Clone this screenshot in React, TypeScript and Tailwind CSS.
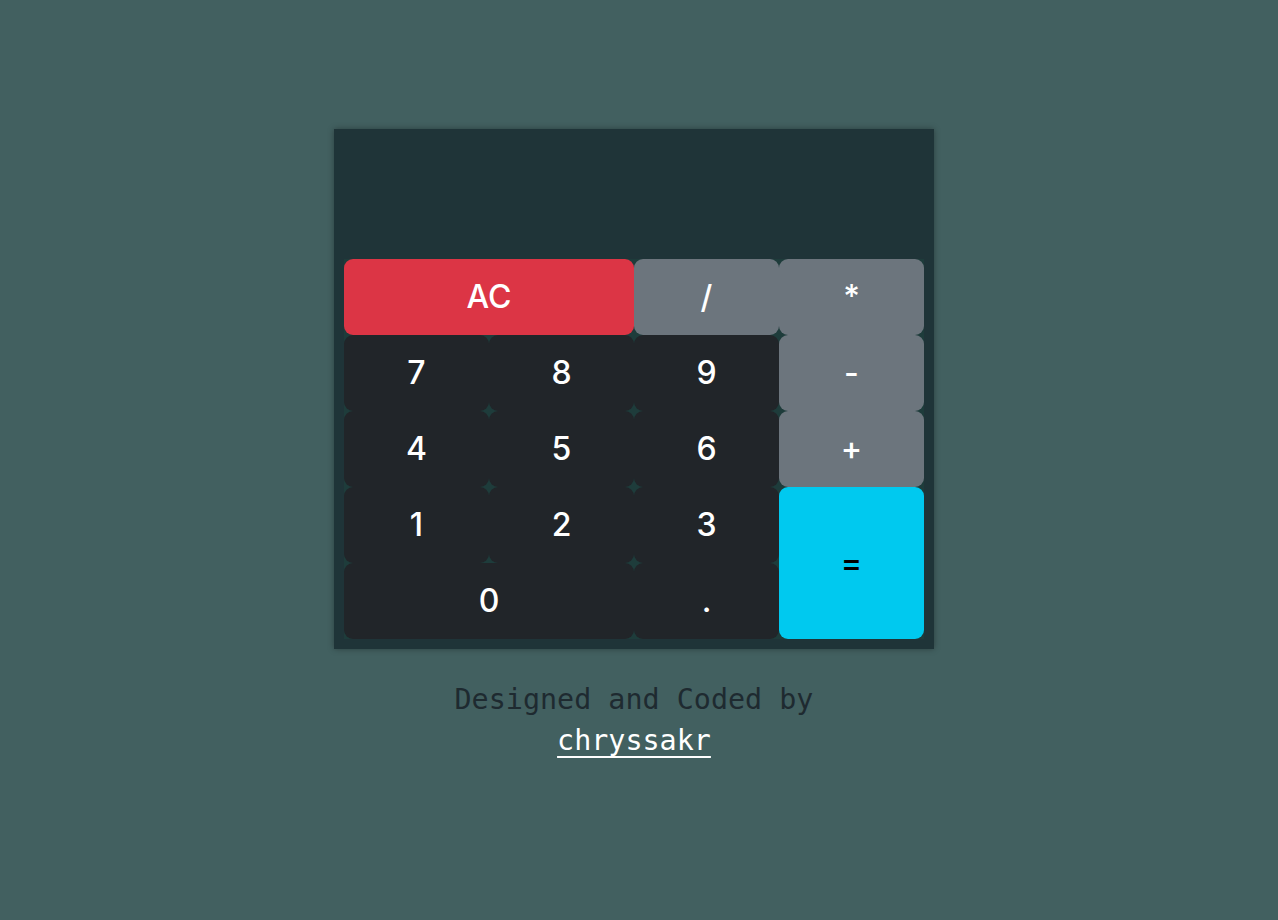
import React from "react";

const btn =
  "flex items-center justify-center rounded-[9px] text-[32px] leading-none font-medium font-['Inter',sans-serif]";

export default function App() {
  const dark = `${btn} bg-[#212529] text-white`;
  const gray = `${btn} bg-[#6c757d] text-white`;
  return (
    <div className="min-h-[920px] w-full bg-[#426060] flex flex-col items-center pt-[129px] pr-[10px]">
      <div className="w-[600px] h-[520px] bg-[#1f3438] p-[10px] flex flex-col shadow-[0_0_6px_rgba(0,0,0,0.35)]">
        <div className="h-[120px]" />
        <div className="grid grid-cols-4 grid-rows-[repeat(5,76px)] bg-[#1e3c3b]">
          <div className={`${btn} col-span-2 bg-[#dc3545] text-white`}>AC</div>
          <div className={gray}>/</div>
          <div className={gray}>*</div>
          <div className={dark}>7</div>
          <div className={dark}>8</div>
          <div className={dark}>9</div>
          <div className={gray}>-</div>
          <div className={dark}>4</div>
          <div className={dark}>5</div>
          <div className={dark}>6</div>
          <div className={gray}>+</div>
          <div className={dark}>1</div>
          <div className={dark}>2</div>
          <div className={dark}>3</div>
          <div className={`${btn} row-span-2 bg-[#00c9ef] text-black`}>=</div>
          <div className={`${dark} col-span-2`}>0</div>
          <div className={dark}>.</div>
        </div>
      </div>
      <div className="mt-[30px] text-center font-['DejaVu_Sans_Mono',monospace] text-[28.4px] leading-[41px] text-[#1e2a30]">
        <div>Designed and Coded by</div>
        <a className="text-white underline underline-offset-[6px] decoration-2">chryssakr</a>
      </div>
    </div>
  );
}
